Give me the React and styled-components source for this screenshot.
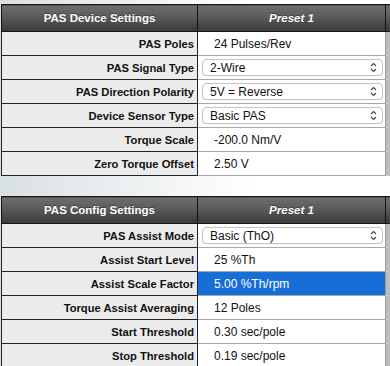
import React from "react";
import styled, { createGlobalStyle } from "styled-components";

const Global = createGlobalStyle`
  html, body {
    margin: 0;
    padding: 0;
  }
  body {
    width: 390px;
    height: 366px;
    overflow: hidden;
    font-family: "Liberation Sans", Arial, sans-serif;
    background: linear-gradient(90deg, #d9e0e3 0%, #eef1f2 35%, #ffffff 65%);
  }
`;

const Page = styled.div`
  padding: 4px 0 0 1px;
  display: flex;
  flex-direction: column;
  gap: 20px;
  width: 389px;
  height: 362px;
  overflow: hidden;
`;

const Table = styled.table`
  flex: none;
  border-collapse: collapse;
  table-layout: fixed;
  width: 484px;
`;

const HeadCell = styled.th`
  height: 26px;
  padding: 0;
  border: 1px solid #151515;
  background: linear-gradient(180deg, #6e6e6e 0%, #5a5a5a 45%, #444 80%, #3b3b3b 100%);
  color: #fff;
  font-size: 11.5px;
  font-weight: bold;
  font-style: ${(p) => (p.$italic ? "italic" : "normal")};
  text-align: center;
  text-shadow: 0 -1px 0 rgba(0, 0, 0, 0.35);
`;

const Label = styled.td`
  height: 23px;
  padding: 0 3px 0 0;
  border: 1px solid #222;
  background: #ebebeb;
  color: #111;
  font-size: 11.2px;
  font-weight: bold;
  text-align: right;
  white-space: nowrap;
`;

const Value = styled.td`
  height: 23px;
  padding: 0 0 0 ${(p) => (p.$select ? "4px" : "16px")};
  border-bottom: 1px solid #a8a8a8;
  background: ${(p) => (p.$active ? "#176ed6" : "#fff")};
  color: ${(p) => (p.$active ? "#fff" : "#111")};
  font-size: 12px;
  white-space: nowrap;
`;

const Extra = styled.td`
  background: #bdbdbd;
  border-left: 1px solid #9c9c9c;
  border-bottom: 1px solid #d0d0d0;
`;

const ExtraHead = styled.th`
  border: 1px solid #151515;
  border-right: none;
  background: linear-gradient(180deg, #6e6e6e 0%, #5a5a5a 45%, #444 80%, #3b3b3b 100%);
`;

const SelectBox = styled.div`
  display: flex;
  align-items: center;
  justify-content: space-between;
  width: 181px;
  height: 17px;
  box-sizing: border-box;
  padding: 0 5px 0 7px;
  border: 1px solid #c4c4c4;
  border-radius: 4px;
  background: #fff;
  box-shadow: 0 1px 0 rgba(0, 0, 0, 0.04);
`;

function Chevrons() {
  return (
    <svg width="7" height="11" viewBox="0 0 7 11" fill="none" stroke="#444" strokeWidth="1.1">
      <path d="M1 4 L3.5 1.5 L6 4" />
      <path d="M1 7 L3.5 9.5 L6 7" />
    </svg>
  );
}

const device = [
  ["PAS Poles", "24 Pulses/Rev"],
  ["PAS Signal Type", "2-Wire", true],
  ["PAS Direction Polarity", "5V = Reverse", true],
  ["Device Sensor Type", "Basic PAS", true],
  ["Torque Scale", "-200.0 Nm/V"],
  ["Zero Torque Offset", "2.50 V"],
];

const config = [
  ["PAS Assist Mode", "Basic (ThO)", true],
  ["Assist Start Level", "25 %Th"],
  ["Assist Scale Factor", "5.00 %Th/rpm", false, true],
  ["Torque Assist Averaging", "12 Poles"],
  ["Start Threshold", "0.30 sec/pole"],
  ["Stop Threshold", "0.19 sec/pole"],
];

function Settings({ title, rows }) {
  return (
    <Table>
      <colgroup>
        <col style={{ width: 196 }} />
        <col style={{ width: 188 }} />
        <col style={{ width: 100 }} />
      </colgroup>
      <thead>
        <tr>
          <HeadCell>{title}</HeadCell>
          <HeadCell $italic>Preset 1</HeadCell>
          <ExtraHead />
        </tr>
      </thead>
      <tbody>
        {rows.map(([label, value, select, active]) => (
          <tr key={label}>
            <Label>{label}</Label>
            <Value $select={select} $active={active}>
              {select ? (
                <SelectBox>
                  <span>{value}</span>
                  <Chevrons />
                </SelectBox>
              ) : (
                value
              )}
            </Value>
            <Extra />
          </tr>
        ))}
      </tbody>
    </Table>
  );
}

export default function App() {
  return (
    <>
      <Global />
      <Page>
        <Settings title="PAS Device Settings" rows={device} />
        <Settings title="PAS Config Settings" rows={config} />
      </Page>
    </>
  );
}
